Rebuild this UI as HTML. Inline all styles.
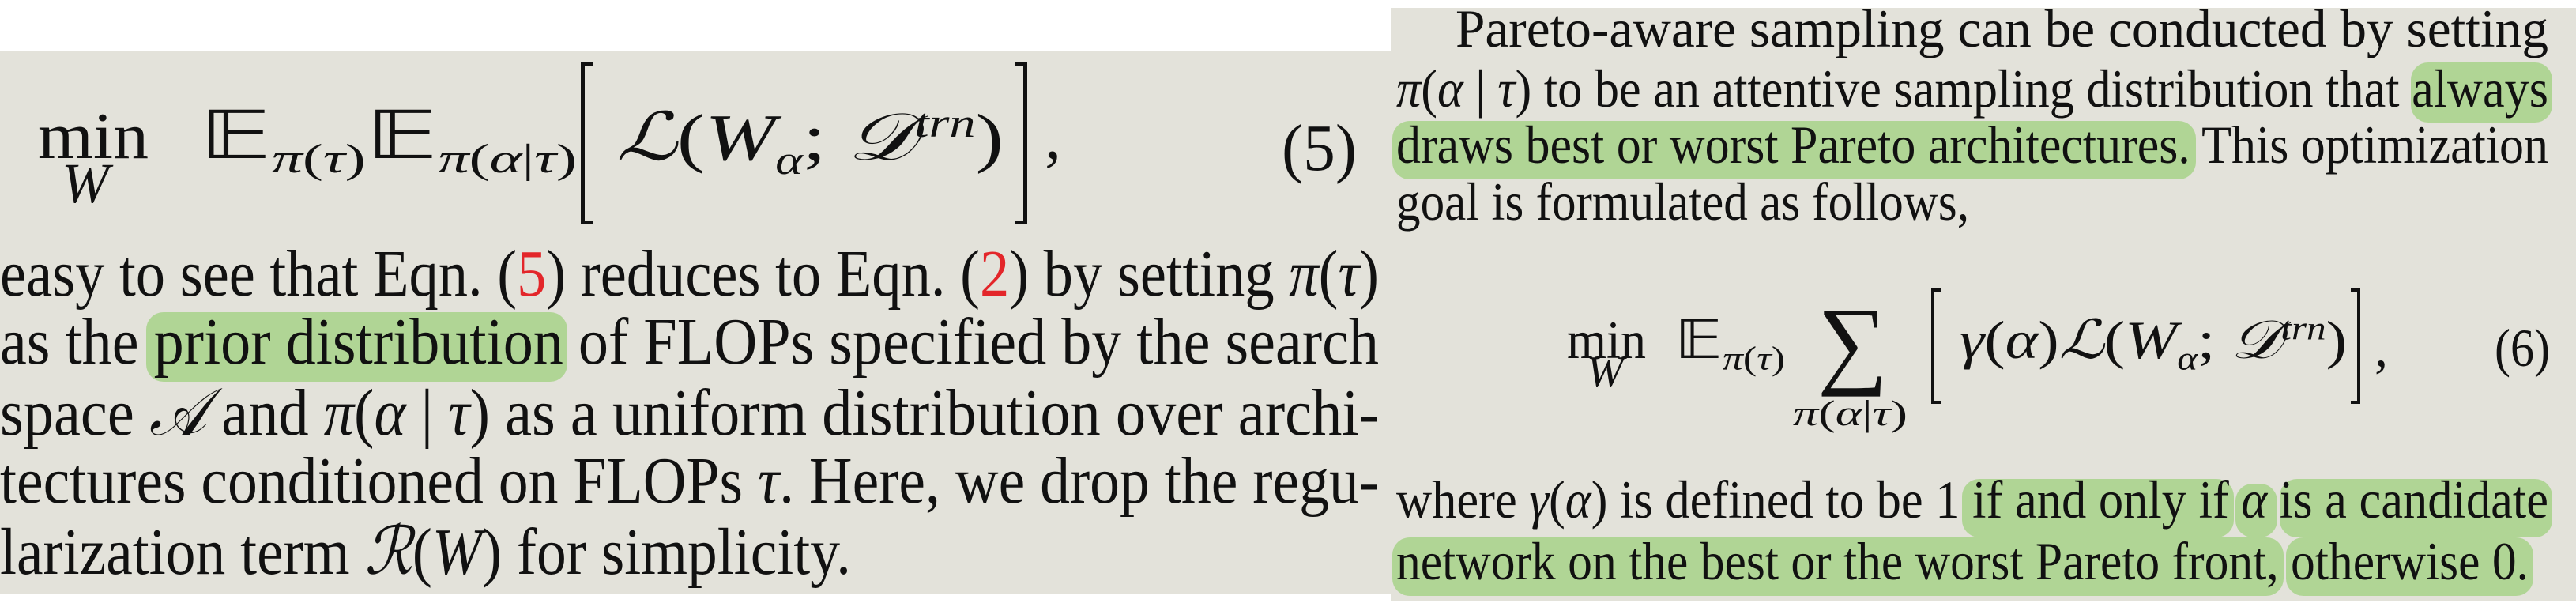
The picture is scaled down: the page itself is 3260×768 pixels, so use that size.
<!DOCTYPE html>
<html><head><meta charset="utf-8"><style>
html,body{margin:0;padding:0}
body{width:3260px;height:768px;position:relative;overflow:hidden;background:#fff;font-family:"Liberation Serif",serif;color:#111}
.bg{position:absolute;background:#e3e2da}
.hl{position:absolute;background:#b0d595;border-radius:22px}
.ln{position:absolute;white-space:nowrap;line-height:1;transform-origin:0 0}
.L{font-size:84px}
.R{font-size:68px}
i{font-style:italic;font-family:"Liberation Serif",serif}
.s{font-family:"DejaVu Serif",serif;font-style:italic}
sub,sup{font-size:62%;line-height:0}
.br{position:absolute;border:5px solid #111}
.red{color:#e3262a}
</style></head><body>
<div class="bg" style="left:0;top:64px;width:1760px;height:688px"></div>
<div class="bg" style="left:1760px;top:10px;width:1500px;height:750px"></div>

<div class="hl" style="left:185px;top:395px;width:533px;height:88px"></div>
<div class="hl" style="left:3051px;top:79px;width:179px;height:76px"></div>
<div class="hl" style="left:1762px;top:153px;width:1017px;height:74px"></div>
<div class="hl" style="left:2483px;top:606px;width:344px;height:74px"></div>
<div class="hl" style="left:2829px;top:612px;width:53px;height:68px"></div>
<div class="hl" style="left:2885px;top:606px;width:345px;height:74px"></div>
<div class="hl" style="left:1762px;top:680px;width:1128px;height:74px"></div>
<div class="hl" style="left:2893px;top:680px;width:313px;height:74px"></div>

<!-- eq 5 -->
<div class="ln L" data-w="140" style="left:48px;top:131px">min</div>
<div class="ln L" style="left:78px;top:196px;font-size:72px"><i>W</i></div>
<div class="ln L" data-w="478" style="left:252px;top:131px">𝔼<sub><i>π</i>(<i>τ</i>)</sub>𝔼<sub><i>π</i>(<i>α</i>|<i>τ</i>)</sub></div>
<div class="br" style="left:735px;top:78px;width:10px;height:196px;border-right:none"></div>
<div class="ln L" data-w="490" style="left:780px;top:131px"><span class="s">ℒ</span>(<i>W</i><sub><i>α</i></sub>; <span class="s">𝒟</span><sup><i>trn</i></sup>)</div>
<div class="br" style="left:1285px;top:78px;width:10px;height:196px;border-left:none"></div>
<div class="ln L" style="left:1322px;top:131px">,</div>
<div class="ln L" data-w="95" style="left:1622px;top:146px">(5)</div>

<div class="ln L" data-w="1745" style="left:0;top:305px">easy to see that Eqn. (<span class="red">5</span>) reduces to Eqn. (<span class="red">2</span>) by setting <i>π</i>(<i>τ</i>)</div>
<div class="ln L" data-w="1745" style="left:0;top:391px">as the prior distribution of FLOPs specified by the search</div>
<div class="ln L" data-w="1745" style="left:0;top:479px">space <span class="s">𝒜</span> and <i>π</i>(<i>α</i> | <i>τ</i>) as a uniform distribution over archi-</div>
<div class="ln L" data-w="1745" style="left:0;top:567px">tectures conditioned on FLOPs <i>τ</i>. Here, we drop the regu-</div>
<div class="ln L" data-w="1077" style="left:0;top:655px">larization term <span class="s">ℛ</span>(<i>W</i>) for simplicity.</div>

<!-- right -->
<div class="ln R" data-w="1383" style="left:1842px;top:2px">Pareto-aware sampling can be conducted by setting</div>
<div class="ln R" data-w="1458" style="left:1767px;top:78px"><i>π</i>(<i>α</i> | <i>τ</i>) to be an attentive sampling distribution that always</div>
<div class="ln R" data-w="1458" style="left:1767px;top:149px">draws best or worst Pareto architectures. This optimization</div>
<div class="ln R" data-w="725" style="left:1767px;top:221px">goal is formulated as follows,</div>

<!-- eq 6 -->
<div class="ln R" data-w="100" style="left:1983px;top:396px">min</div>
<div class="ln R" style="left:2008px;top:443px;font-size:56px"><i>W</i></div>
<div class="ln R" data-w="140" style="left:2119px;top:396px">𝔼<sub><i>π</i>(<i>τ</i>)</sub></div>
<div class="ln" style="left:2300px;top:372px;font-size:125px">∑</div>
<div class="ln" data-w="145" style="left:2269px;top:500px;font-size:46px"><i>π</i>(<i>α</i>|<i>τ</i>)</div>
<div class="br" style="left:2444px;top:365px;width:8px;height:138px;border-width:4px;border-right:none"></div>
<div class="ln R" data-w="490" style="left:2480px;top:396px"><i>γ</i>(<i>α</i>)<span class="s">ℒ</span>(<i>W</i><sub><i>α</i></sub>; <span class="s">𝒟</span><sup><i>trn</i></sup>)</div>
<div class="br" style="left:2975px;top:365px;width:8px;height:138px;border-width:4px;border-left:none"></div>
<div class="ln R" style="left:3005px;top:406px">,</div>
<div class="ln R" data-w="70" style="left:3157px;top:406px">(6)</div>

<div class="ln R" data-w="1458" style="left:1767px;top:598px">where <i>γ</i>(<i>α</i>) is defined to be 1 if and only if <i>α</i> is a candidate</div>
<div class="ln R" data-w="1433" style="left:1767px;top:676px">network on the best or the worst Pareto front, otherwise 0.</div>

<script>
document.querySelectorAll('.ln[data-w]').forEach(function(e){
  var w=e.getBoundingClientRect().width; var t=+e.getAttribute('data-w');
  if(w>0) e.style.transform='scaleX('+(t/w)+')';
});
</script>
</body></html>
